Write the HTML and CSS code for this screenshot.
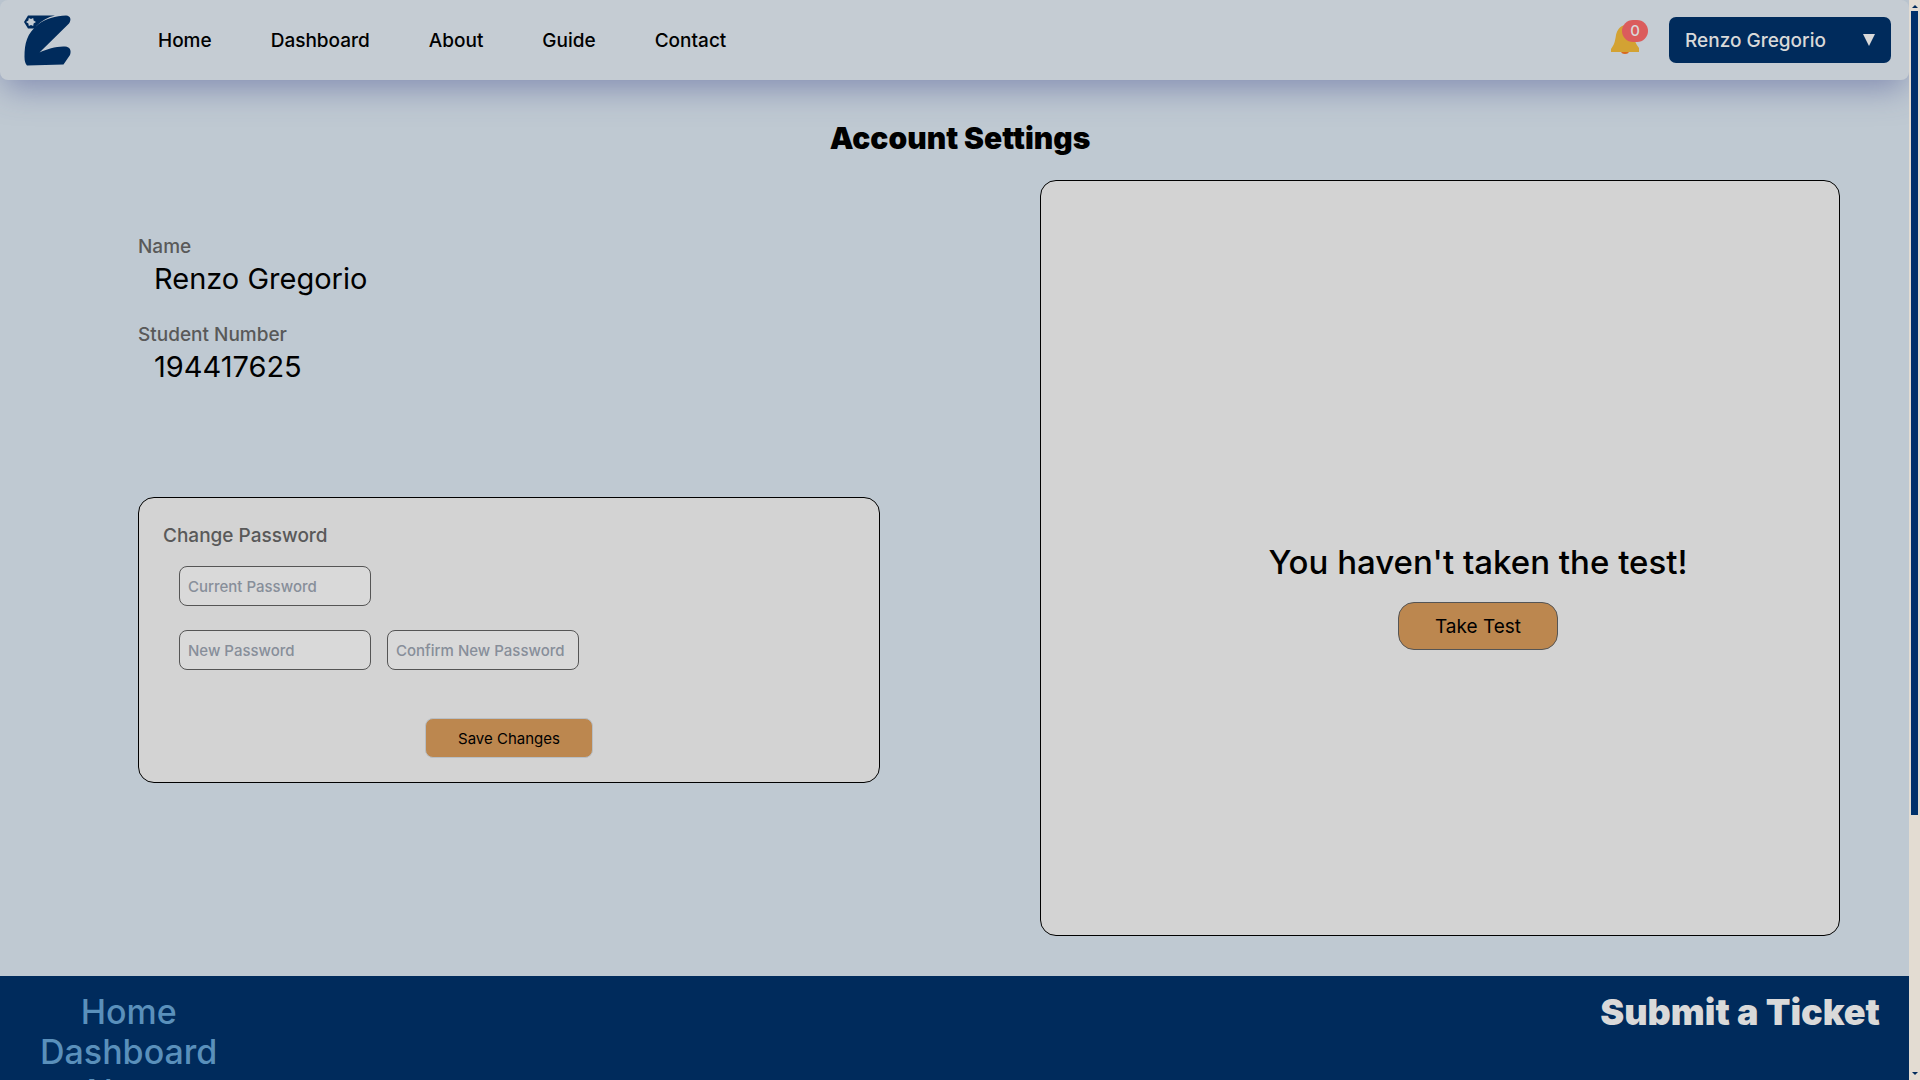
FILE: index.html
```html
<!DOCTYPE html>
<html lang="en">
<head>
<meta charset="utf-8">
<meta name="viewport" content="width=device-width, initial-scale=1">
<title>Account Settings</title>
<link rel="stylesheet" href="styles.css">
</head>
<body>
<div class="shell">
  <div class="page">
    <header class="navbar">
      <a class="logo" href="#" aria-label="Home page">
        <svg viewBox="0 0 48 54" width="48" height="54" aria-hidden="true">
          <path class="ink" d="M4 2.500H31C24 4 17 8 12.500 13L11 15.500H4L0 9Z"/>
          <path class="ink" d="M14 11.500C21 6 32 2.500 42 2.500C47 3 47.500 7 45 10.500L15.500 39.500C23 36 33 33 41 33.500C46.500 34 47.500 38 46 42L39.500 51.500L3 52.500Q.5 50 .5 44C.5 30 3 20.500 14 11.500Z"/>
          <path class="cut" d="M4.800 5L7 6L9.200 5L9.600 7.400L12 9L9.600 10.600L9.200 13L7 12L4.800 13L4.400 10.600L2 9L4.400 7.400Z"/>
        </svg>
      </a>
      <nav class="links" aria-label="Main">
        <a href="#">Home</a>
        <a href="#">Dashboard</a>
        <a href="#">About</a>
        <a href="#">Guide</a>
        <a href="#">Contact</a>
      </nav>
      <button class="bell" type="button" aria-label="Notifications">
        <svg viewBox="0 0 28 30" width="28" height="30" aria-hidden="true">
          <path class="clapper" d="M10 26h8a4 3 0 0 1-8 0Z"/>
          <path class="dome" d="M14 0C19 1 22 5 23 10C24 17 25 19 28 23V27H0V24C3 20 4 17 5 10C6 5 9 1 14 0Z"/>
        </svg>
        <span class="badge">0</span>
      </button>
      <button class="account" type="button" aria-haspopup="menu">
        <span>Renzo Gregorio</span>
        <svg viewBox="0 0 12 12" width="12" height="12" aria-hidden="true"><path d="M0 0H12L6 12Z"/></svg>
      </button>
    </header>

    <main class="main">
      <h1 class="title">Account Settings</h1>
      <div class="columns">
        <section class="profile">
          <dl class="facts">
            <dt>Name</dt>
            <dd>Renzo Gregorio</dd>
            <dt>Student Number</dt>
            <dd>194417625</dd>
          </dl>
          <form class="card password">
            <h2 class="label">Change Password</h2>
            <div class="fields">
              <input type="password" placeholder="Current Password" aria-label="Current Password">
            </div>
            <div class="fields">
              <input type="password" placeholder="New Password" aria-label="New Password">
              <input type="password" placeholder="Confirm New Password" aria-label="Confirm New Password">
            </div>
            <button class="save" type="button">Save Changes</button>
          </form>
        </section>
        <section class="card test">
          <p class="notice">You haven't taken the test!</p>
          <button class="take" type="button">Take Test</button>
        </section>
      </div>
    </main>

    <footer class="footer">
      <nav class="footer-links" aria-label="Footer">
        <a href="#">Home</a>
        <a href="#">Dashboard</a>
        <a href="#">About</a>
        <a href="#">Guide</a>
        <a href="#">Contact</a>
      </nav>
      <h2 class="ticket">Submit a Ticket</h2>
    </footer>
  </div>
  <div class="rail" aria-hidden="true">
    <svg viewBox="0 0 6 3" width="6" height="3"><path d="M0 3L3 0L6 3Z"/></svg>
    <div class="track"><div class="thumb"></div></div>
    <svg viewBox="0 0 6 3" width="6" height="3"><path d="M0 0L3 3L6 0Z"/></svg>
  </div>
</div>
</body>
</html>
```
FILE: styles.css
```css
:root {
  --navy: #002b5c;
  --sky: #bfc9d2;
  --panel: #d3d3d3;
  --field: #d9d9d9;
  --muted: #595959;
  --orange: #bc874f;
}

* { box-sizing: border-box; }

body {
  margin: 0;
  font-family: Inter, "Liberation Sans", sans-serif;
  color: #000;
  background: var(--sky);
}

h1, h2, p, dl, dd { margin: 0; }
a { color: inherit; text-decoration: none; }
button, input { font: inherit; }
svg { display: block; }

.shell { display: flex; height: 100vh; }

.page {
  flex: 1;
  min-width: 0;
  overflow: hidden auto;
  scrollbar-width: none;
}

.navbar {
  display: flex;
  align-items: center;
  height: 80px;
  padding: 0 18px 0 24px;
  background: #c5ccd3;
  border-radius: 8px;
  box-shadow: 0 12px 32px -4px rgba(70, 80, 145, 0.5);
}

.ink { fill: var(--navy); }
.cut { fill: #c5ccd3; }

.links {
  display: flex;
  gap: 59px;
  margin-left: 86px;
  font-size: 19px;
  font-weight: 500;
}

.bell {
  position: relative;
  margin: 0 30px 0 auto;
  padding: 0;
  border: 0;
  background: none;
}

.dome { fill: #d3a233; }
.clapper { fill: #d9691e; }

.badge {
  position: absolute;
  top: -5px;
  right: -9px;
  width: 26px;
  border-radius: 11px;
  background: #db5c5c;
  color: #d9d9d9;
  font-size: 15px;
  font-weight: 500;
  line-height: 22px;
  text-align: center;
}

.account {
  display: flex;
  align-items: center;
  justify-content: space-between;
  width: 222px;
  height: 46px;
  padding: 0 16px;
  border: 0;
  border-radius: 7px;
  background: var(--navy);
  color: #d9d9d9;
  font-size: 19px;
  font-weight: 500;
}

.account svg { fill: #d9d9d9; }

.main { padding: 40px 69px 40px 138px; }

.title {
  margin-left: -58px;
  font-size: 30px;
  font-weight: 900;
  line-height: 36px;
  text-align: center;
}

.columns {
  display: grid;
  grid-template-columns: 742fr 800fr;
  gap: 160px;
  margin-top: 24px;
}

.card {
  border: 1px solid #000;
  border-radius: 16px;
  background: var(--panel);
}

.facts { padding-top: 53px; }

.facts dt, .label {
  color: var(--muted);
  font-size: 19px;
  font-weight: 500;
  line-height: 28px;
}

.facts dd {
  margin: 0 0 24px 16px;
  font-size: 29px;
  line-height: 36px;
}

.password {
  display: flex;
  flex-direction: column;
  margin-top: 112px;
  padding: 24px;
}

.fields {
  display: flex;
  gap: 16px;
  margin: 16px 0 8px 16px;
}

.fields input {
  width: 192px;
  height: 40px;
  padding: 0 8px;
  border: 1px solid #555;
  border-radius: 8px;
  background: var(--field);
  font-size: 15px;
  font-weight: 500;
}

.fields input::placeholder { color: #878e99; opacity: 1; }

.save {
  align-self: center;
  width: 168px;
  height: 40px;
  margin-top: 40px;
  border: 1px solid #b8bec4;
  border-radius: 8px;
  background: var(--orange);
  color: #000;
  font-size: 15px;
}

.test {
  display: flex;
  flex-direction: column;
  align-items: center;
  justify-content: center;
  gap: 20px;
  min-height: 756px;
  padding: 76px 0 0 76px;
}

.notice {
  font-size: 33px;
  font-weight: 500;
  line-height: 40px;
}

.take {
  width: 160px;
  height: 48px;
  border: 1px solid #555;
  border-radius: 16px;
  background: var(--orange);
  color: #000;
  font-size: 19px;
}

.footer {
  display: flex;
  align-items: flex-start;
  justify-content: space-between;
  padding: 16px 29px 32px 40px;
  background: var(--navy);
}

.footer-links {
  display: grid;
  justify-items: center;
  color: #5a90bb;
  font-size: 34px;
  font-weight: 500;
  line-height: 40px;
}

.ticket {
  color: #d9d9d9;
  font-size: 36px;
  font-weight: 900;
  line-height: 40px;
}

.rail {
  display: flex;
  flex-direction: column;
  align-items: center;
  justify-content: space-between;
  width: 11px;
  padding: 5px 0;
  background: #e3dcd2;
  fill: var(--navy);
}

.track { flex: 1; padding: 3px 0; }

.thumb {
  width: 7px;
  height: 76%;
  background: #00316b;
}
```
